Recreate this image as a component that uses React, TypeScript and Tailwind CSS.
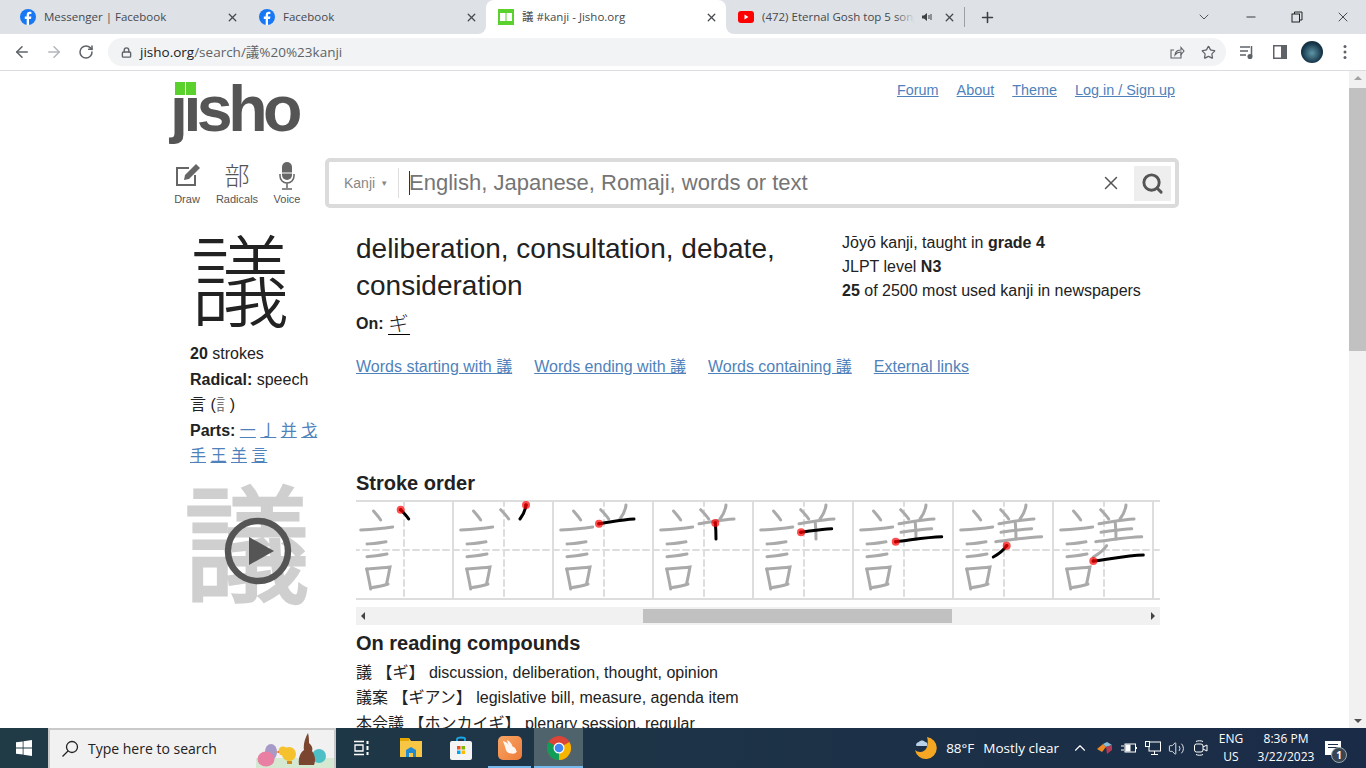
import React from "react";
import { ArrowLeft, ArrowRight, RotateCw, Lock, Star, X, Plus, ChevronDown, Minus, Search, ChevronUp, Volume2 } from "lucide-react";

const SANS = "font-['Liberation_Sans','Noto_Sans_CJK_JP',sans-serif]";
const UI = "font-['Open_Sans','Noto_Sans_CJK_JP',sans-serif]";
const LINK = "text-[#4f82bb] underline";

function Fb() {
  return (
    <svg viewBox="0 0 16 16" className="w-4 h-4 shrink-0">
      <circle cx="8" cy="8" r="8" fill="#1877f2" />
      <path d="M9 16V10h2l.4-2.4H9V6.2c0-.8.3-1.2 1.3-1.2h1.1V3c-.4-.1-1.1-.2-1.8-.2C8 2.8 6.700 4 6.700 6v1.600H4.800V10h1.900v6z" fill="#fff" />
    </svg>
  );
}
function JishoFav() {
  return (
    <svg viewBox="0 0 16 16" className="w-4 h-4 shrink-0">
      <rect width="16" height="16" fill="#5ad12d" />
      <rect x="2" y="4" width="5.500" height="8" fill="#fff" />
      <rect x="8.500" y="4" width="5.500" height="8" fill="#fff" />
    </svg>
  );
}
function Yt() {
  return (
    <svg viewBox="0 0 16 16" className="w-4 h-4 shrink-0">
      <rect y="2" width="16" height="12" rx="3" fill="#f00" />
      <path d="M6.500 5.500 10.500 8l-4 2.500z" fill="#fff" />
    </svg>
  );
}

function Tab({ icon, title, active, w, audio }: { icon: React.ReactNode; title: string; active?: boolean; w: string; audio?: boolean }) {
  return (
    <div className={`${w} relative h-[34px] flex items-center pl-3 pr-2 shrink-0 ${active ? "bg-white rounded-t-[8px]" : ""}`}>
      {active && (
        <>
          <div className="absolute -left-[8px] bottom-0 w-2 h-2 bg-white">
            <div className="w-2 h-2 bg-[#dee1e6] rounded-br-[8px]" />
          </div>
          <div className="absolute -right-[8px] bottom-0 w-2 h-2 bg-white">
            <div className="w-2 h-2 bg-[#dee1e6] rounded-bl-[8px]" />
          </div>
        </>
      )}
      {icon}
      <span className={`relative ml-2 flex-1 overflow-hidden whitespace-nowrap text-[11.5px] text-[#45494e] ${UI}`}>
        {title}
        {audio && <span className="absolute right-0 top-0 bottom-0 w-[20px] bg-gradient-to-r from-transparent to-[#dee1e6]" />}
      </span>
      {audio && (
        <svg viewBox="0 0 12 12" className="w-3 h-3 shrink-0 mx-[6px]">
          <path d="M1 4.500h2L6 2v8L3 7.500H1z" fill="#3c4043" />
          <path d="M8 4v4M10 3v6" stroke="#3c4043" strokeWidth="1" />
        </svg>
      )}
      <X size={13} strokeWidth={2.4} className="text-[#45494e] shrink-0 ml-1" />
    </div>
  );
}

function Chrome() {
  return (
    <>
      <div className="h-[34px] bg-[#dee1e6] flex items-center pl-2 shrink-0">
        <Tab icon={<Fb />} title="Messenger | Facebook" w="w-[239px]" />
        <Tab icon={<Fb />} title="Facebook" w="w-[239px]" />
        <Tab icon={<JishoFav />} title="議 #kanji - Jisho.org" active w="w-[240px]" />
        <Tab icon={<Yt />} title="(472) Eternal Gosh top 5 songs" audio w="w-[238px]" />
        <div className="w-px h-5 bg-[#9aa0a6]" />
        <Plus size={17} strokeWidth={2.2} className="ml-[14px] text-[#3c4043]" />
        <div className="flex-1" />
        <ChevronDown size={16} strokeWidth={1.3} className="text-[#3c4043]" />
        <Minus size={14} strokeWidth={1.5} className="ml-[32px] text-[#222]" />
        <svg viewBox="0 0 12 12" className="w-3 h-3 ml-[33px]" fill="none" stroke="#222" strokeWidth="1">
          <rect x="1" y="3" width="7.500" height="8" />
          <path d="M3.500 3V1H11v8H8.500" />
        </svg>
        <X size={16} strokeWidth={1.2} className="ml-[32px] mr-[15px] text-[#222]" />
      </div>
      <div className="h-[36px] bg-white flex items-center pl-[13px] shrink-0">
        <ArrowLeft size={18} strokeWidth={2.1} className="text-[#5f6368]" />
        <ArrowRight size={18} strokeWidth={2.1} className="ml-[14px] text-[#b4b7ba]" />
        <RotateCw size={16} strokeWidth={2.3} className="ml-[15px] text-[#5f6368]" />
        <div className="ml-[14px] w-[1118px] h-[28px] rounded-full bg-[#f1f3f4] flex items-center pl-[13px] pr-[10px]">
          <Lock size={11} strokeWidth={3} className="text-[#5f6368]" />
          <span className={`ml-[8px] text-[13.5px] text-[#202124] ${UI}`}>
            jisho.org<span className="text-[#5f6368]">/search/議%20%23kanji</span>
          </span>
          <div className="flex-1" />
          <svg viewBox="0 0 16 16" className="w-4 h-4" fill="none" stroke="#5f6368" strokeWidth="1.100">
            <path d="M12 9.500V14H2V6h3" />
            <path d="M6 11c.3-3 2.500-5 6-5V3.500L15 7l-3 3.500V8c-2.500 0-4.500 1-6 3z" />
          </svg>
          <Star size={15} strokeWidth={2} className="ml-[16px] text-[#5f6368]" />
        </div>
        <svg viewBox="0 0 16 16" className="w-4 h-4 ml-[13px]" fill="none" stroke="#5f6368" strokeWidth="1.500">
          <path d="M1 3h10M1 7h8M1 11h6M12.500 2v10" />
          <circle cx="11" cy="12.500" r="1.800" fill="#5f6368" />
        </svg>
        <svg viewBox="0 0 14 14" className="w-[14px] h-[14px] ml-[18px]">
          <rect x=".75" y=".75" width="12.500" height="12.500" fill="none" stroke="#5f6368" strokeWidth="1.500" />
          <rect x="8" y="1" width="5" height="12" fill="#5f6368" />
        </svg>
        <div className="w-[22px] h-[22px] ml-[14px] rounded-full bg-[radial-gradient(circle_at_50%_55%,#5e97a8,#17364a_60%,#0d1c2b)]" />
        <svg viewBox="0 0 4 16" className="w-1 h-4 ml-[20px]" fill="#5f6368">
          <circle cx="2" cy="2.500" r="1.500" />
          <circle cx="2" cy="8" r="1.500" />
          <circle cx="2" cy="13.500" r="1.500" />
        </svg>
      </div>
      <div className="h-px bg-[#dadce0] shrink-0" />
    </>
  );
}

const STROKES = [
  "M20.500 10 C23 13 26 16 27.700 19",
  "M7.700 29 C18 28.500 30 27.500 39.700 26",
  "M14 43 C20 42.500 27 42 33 40.700",
  "M14 55.700 C20 55 27 54.500 34 53",
  "M13.700 68 C15 74 16.500 81 17.700 88",
  "M13.700 68 C21 67.500 30 67 37 66 C36 71 35 77 33.700 82",
  "M17.700 86.700 C23 86 30 85 35 83",
  "M47.700 8.700 C50 11 53.500 14.500 55.700 18",
  "M73 4 C72.500 9 70 14 67 18",
  "M46 22.700 C58 21 70 18.500 81 18",
  "M62.300 22 C62.800 27 63 33 63 38",
  "M48 31.300 C58 30 68 28 78.700 27.700",
  "M42.700 40.700 C58 39 74 36 88.700 35.700",
  "M53.700 44.700 C50 50 45 53.500 40.300 56",
  "M40.300 60 C57 58 74 54.500 90.300 54",
];
const STARTS: [number, number][] = [
  [47.7, 8.7], [73, 4], [46, 22.7], [62.3, 22], [48, 31.3], [42.7, 40.7], [53.7, 44.7], [40.3, 60],
];

function Frame({ n }: { n: number }) {
  const gray = n < 0 ? [] : STROKES.slice(0, 7 + n);
  return (
    <svg viewBox="0 0 100 100" className="w-[100px] h-[100px] shrink-0 overflow-visible" fill="none" strokeLinecap="round">
      <path d="M0 50H100M51 0V100" stroke="#ddd" strokeWidth="2" strokeDasharray="6 4" />
      <path d="M0 1H100M0 99H100M0 0V100" stroke="#ddd" strokeWidth="2" strokeLinecap="butt" />
      <g transform="translate(0 1)">
        {gray.map((d, i) => (
          <path key={i} d={d} stroke="#aaa" strokeWidth="3" />
        ))}
        {n >= 0 && (
          <>
            <path d={STROKES[7 + n]} stroke="#000" strokeWidth="3" />
            <circle cx={STARTS[n][0]} cy={STARTS[n][1]} r="4" fill="#f00" fillOpacity=".7" />
            <circle cx={STARTS[n][0]} cy={STARTS[n][1]} r="1.800" fill="#b00" />
          </>
        )}
      </g>
    </svg>
  );
}

function Tray() {
  return (
    <div className={`flex text-[11px] text-[#555] ${SANS}`}>
      <div className="w-[50px] flex flex-col items-center">
        <svg viewBox="0 0 26 26" className="w-[26px] h-[26px] mt-[4px] ml-[2px]" fill="none">
          <path d="M20 13v10H2V6h12" stroke="#666" strokeWidth="2" />
          <path d="M9 18l1-5L21 2l4 4-11 11z" fill="#666" />
        </svg>
        <span className="mt-[3px]">Draw</span>
      </div>
      <div className="w-[50px] flex flex-col items-center">
        <span className="text-[25px] leading-[33px] font-['Noto_Sans_CJK_JP',sans-serif] font-light">部</span>
        <span>Radicals</span>
      </div>
      <div className="w-[50px] flex flex-col items-center">
        <svg viewBox="0 0 20 30" className="w-[20px] h-[30px] mt-[3px]" fill="none">
          <rect x="5" y="1" width="10" height="18" rx="5" fill="#666" />
          <path d="M5 12h10" stroke="#fff" strokeWidth="1" />
          <path d="M3 13v2c0 4 3 7 7 7s7-3 7-7v-2M10 22v5M5 28h10" stroke="#666" strokeWidth="1.500" />
        </svg>
        <span>Voice</span>
      </div>
    </div>
  );
}

function SearchBar() {
  return (
    <div className="ml-[13px] w-[854px] h-[50px] border-[4px] border-[#dbdbdb] rounded-[5px] bg-white flex items-center pl-[15px] pr-[4px]">
      <span className={`text-[14px] text-[#888] ${SANS}`}>Kanji</span>
      <span className="ml-[5px] text-[8px] text-[#888]">▼</span>
      <div className="ml-[10px] w-px h-[30px] bg-[#ddd]" />
      <div className="ml-[10px] w-px h-[24px] bg-[#333]" />
      <span className={`-ml-[1px] -mt-[2px] text-[22px] text-[#757575] ${SANS}`}>English, Japanese, Romaji, words or text</span>
      <div className="flex-1" />
      <X size={22} strokeWidth={1.6} className="text-[#555]" />
      <div className="ml-[12px] w-[37px] h-[35px] bg-[#eee] flex items-center justify-center">
        <Search size={23} strokeWidth={3} className="text-[#555]" />
      </div>
    </div>
  );
}

function LeftCol() {
  return (
    <div className={`ml-[190px] w-[166px] shrink-0 text-[16px] leading-[25.6px] text-[#222] ${SANS}`}>
      <div className="text-[100px] leading-[133px] font-['Noto_Sans_CJK_JP',sans-serif] font-light ml-0 pt-[1px] h-[133px]">議</div>
      <div>
        <b>20</b> strokes
      </div>
      <div>
        <b>Radical:</b> speech
      </div>
      <div>
        言 <span>(</span>
        <span className="text-[#777]">訁</span>
        <span className="-ml-[2px]">)</span>
      </div>
      <div>
        <b>Parts:</b>{" "}
        {["一", "亅", "并", "戈"].map((p) => (
          <span key={p}>
            <span className={LINK}>{p}</span>{" "}
          </span>
        ))}
      </div>
      <div>
        {["手", "王", "羊", "言"].map((p) => (
          <span key={p}>
            <span className={LINK}>{p}</span>{" "}
          </span>
        ))}
      </div>
      <div className="relative mt-[3px] w-[120px] h-[130px]">
        <span className="block -ml-[6px] text-[126px] leading-[130px] font-normal [-webkit-text-stroke:3px_#cfcfcf] text-[#cfcfcf] font-['Noto_Sans_CJK_JP',sans-serif] blur-[0.6px]">議</span>
        <svg viewBox="0 0 68 68" className="absolute left-[34px] top-[45px] w-[68px] h-[68px]">
          <circle cx="34" cy="34" r="30" fill="none" stroke="#555" strokeWidth="6.500" />
          <path d="M25 20 L50 34 L25 48z" fill="#555" />
        </svg>
      </div>
    </div>
  );
}

function RightCol() {
  return (
    <div className={`w-[804px] shrink-0 text-[#222] ${SANS}`}>
      <div className="flex pt-[22px]">
        <div className="w-[487px]">
          <div className="w-[440px] text-[28px] leading-[37px]">deliberation, consultation, debate, consideration</div>
          <div className="mt-[7px] flex items-center h-[26px] text-[16px]">
            <b>On:</b>
            <span className="ml-[4px] -mt-[2px] text-[20px] leading-[22px] border-b border-black font-['Noto_Sans_CJK_JP',sans-serif] font-light px-[1px]">ギ</span>
          </div>
        </div>
        <div className="text-[16px] leading-[24px] pt-[1px] -ml-[1px]">
          <div>
            Jōyō kanji, taught in <b>grade 4</b>
          </div>
          <div>
            JLPT level <b>N3</b>
          </div>
          <div>
            <b>25</b> of 2500 most used kanji in newspapers
          </div>
        </div>
      </div>
      <div className="mt-[17px] flex gap-[22px] text-[16px] leading-[25.6px]">
        <span className={LINK}>Words starting with 議</span>
        <span className={LINK}>Words ending with 議</span>
        <span className={LINK}>Words containing 議</span>
        <span className={LINK}>External links</span>
      </div>
      <div className="mt-[88px] text-[20px] leading-[30px] font-bold">Stroke order</div>
      <div className="mt-[2px] w-[804px] h-[100px] overflow-hidden">
        <div className="flex -ml-[3px]">
          {[0, 1, 2, 3, 4, 5, 6, 7].map((n) => (
            <Frame key={n} n={n} />
          ))}
          <Frame n={-1} />
        </div>
      </div>
      <div className="mt-[7px] h-[18px] bg-[#f1f1f1] flex items-center">
        <span className="ml-[5px] w-0 h-0 border-y-[4px] border-y-transparent border-r-[4px] border-r-[#444]" />
        <div className="ml-[278px] w-[309px] h-[14px] bg-[#c1c1c1]" />
        <div className="flex-1" />
        <span className="mr-[5px] w-0 h-0 border-y-[4px] border-y-transparent border-l-[4px] border-l-[#444]" />
      </div>
      <div className="mt-[3px] text-[20px] leading-[30px] font-bold">On reading compounds</div>
      <div className="mt-[2px] text-[16px] leading-[25.6px]">
        <div>議 【ギ】 discussion, deliberation, thought, opinion</div>
        <div>議案 【ギアン】 legislative bill, measure, agenda item</div>
        <div>本会議 【ホンカイギ】 plenary session, regular</div>
      </div>
    </div>
  );
}

function Page() {
  return (
    <div className="flex-1 min-h-0 flex overflow-hidden bg-white relative">
      <div className="flex-1 min-w-0 overflow-hidden">
        <div className="ml-[170px] w-[1005px] h-[87px] flex justify-between">
          <div className="relative w-[135px] h-[87px]">
            <span className={`absolute left-0 top-[5px] text-[64.5px] leading-[66px] font-bold tracking-[-4.5px] text-[#555] ${SANS}`}>jisho</span>
            <svg viewBox="0 0 30 16" className="absolute left-0 top-[11px] w-[30px] h-[16px]">
              <rect width="30" height="16" fill="#fff" />
              <rect x="5" width="10" height="13" fill="#5ad12d" />
              <rect x="16" width="10" height="13" fill="#5ad12d" />
            </svg>
          </div>
          <div className={`pt-[10px] flex gap-[18px] text-[14.4px] leading-[18px] ${SANS}`}>
            <span className={LINK}>Forum</span>
            <span className={LINK}>About</span>
            <span className={LINK}>Theme</span>
            <span className={LINK}>Log in / Sign up</span>
          </div>
        </div>
        <div className="ml-[162px] flex">
          <Tray />
          <SearchBar />
        </div>
        <div className="flex">
          <LeftCol />
          <RightCol />
        </div>
      </div>
      <div className="w-[17px] shrink-0 bg-[#f1f1f1] flex flex-col items-center">
        <span className="mt-[5px] w-0 h-0 border-x-[4px] border-x-transparent border-b-[4px] border-b-[#a3a3a3]" />
        <div className="mt-[8px] w-full h-[263px] bg-[#c1c1c1]" />
        <div className="flex-1" />
        <span className="mb-[5px] w-0 h-0 border-x-[4px] border-x-transparent border-t-[4px] border-t-[#505050]" />
      </div>
    </div>
  );
}

function Taskbar() {
  return (
    <div className={`h-[40px] shrink-0 flex items-stretch text-white bg-gradient-to-r from-[#203b46] to-[#1a2b47] ${UI}`}>
      <div className="w-[48px] flex items-center justify-center">
        <svg viewBox="0 0 16 16" className="w-4 h-4" fill="#fff">
          <path d="M0 2.300 6.700 1.400V7.600H0zM7.500 1.300 16 0V7.600H7.500zM0 8.400H6.700V14.600L0 13.700zM7.500 8.400H16V16L7.500 14.700z" />
        </svg>
      </div>
      <div className="w-[288px] bg-[#f1f1f1] border-2 border-[#c9c9c9] border-b-0 flex items-center relative overflow-hidden">
        <svg viewBox="0 0 18 18" className="ml-[11px] w-[18px] h-[18px]" fill="none" stroke="#222" strokeWidth="1.300">
          <circle cx="11" cy="7" r="5.500" />
          <path d="M7 11 1.500 16.500" />
        </svg>
        <span className="ml-[9px] -mt-[2px] text-[14px] text-[#222]">Type here to search</span>
        <svg viewBox="0 0 78 38" className="absolute right-0 bottom-0 w-[78px] h-[38px]">
          <rect x="0" y="28" width="78" height="10" fill="#d4e8d2" />
          <ellipse cx="15" cy="22" rx="6" ry="8" fill="#a79ac6" />
          <ellipse cx="10" cy="29" rx="8.500" ry="7.500" fill="#e97fa3" />
          <ellipse cx="63" cy="26" rx="7" ry="7" fill="#4cc0c6" />
          <circle cx="33" cy="24" r="7" fill="#f5c12c" />
          <circle cx="27" cy="21" r="4.500" fill="#f5c12c" />
          <path d="M23 21l-3 1 3 1z" fill="#e0641c" />
          <path d="M31 31h5v3h-5z" fill="#d08a20" />
          <path d="M43 35c-1-7 1-12 5-15-1-5 1-12 4-17 1 4 1 7 1 10 3 3 4 5 3 8 3 4 4 9 2 14z" fill="#7a4630" />
        </svg>
      </div>
      <div className="w-[48px] flex items-center justify-center ml-[1px]">
        <svg viewBox="0 0 16 16" className="w-4 h-4" fill="none" stroke="#fff" strokeWidth="1.300">
          <path d="M1 1.500H11M1 14.500H11M2 5h8v6H2z" />
          <path d="M14.500 1v3M14.500 6v4M14.500 12v3" strokeWidth="2" />
        </svg>
      </div>
      <div className="w-[50px] ml-[1px] flex items-center justify-center">
        <svg viewBox="0 0 22 22" className="w-[22px] h-[22px]">
          <path d="M0 1h9l2 3h11v16H0z" fill="#f7c644" />
          <path d="M0 1h9v3H0z" fill="#e6a800" />
          <path d="M6 20v-7l5-3 5 3v7h-3v-4H9v4z" fill="#1f8ad2" />
        </svg>
      </div>
      <div className="w-[49px] flex items-center justify-center">
        <svg viewBox="0 0 22 24" className="w-[22px] h-[24px]">
          <path d="M7 6V3c0-2 8-2 8 0v3" fill="none" stroke="#1aa7e8" strokeWidth="1.800" />
          <rect y="5" width="22" height="19" rx="2" fill="#f4f4f4" />
          <rect x="7" y="10" width="3.500" height="3.500" fill="#f25022" />
          <rect x="11.500" y="10" width="3.500" height="3.500" fill="#7fba00" />
          <rect x="7" y="14.500" width="3.500" height="3.500" fill="#00a4ef" />
          <rect x="11.500" y="14.500" width="3.500" height="3.500" fill="#ffb900" />
        </svg>
      </div>
      <div className="w-[49px] flex flex-col items-center justify-center relative">
        <svg viewBox="0 0 24 24" className="w-[24px] h-[24px]">
          <defs>
            <linearGradient id="appg" x1="0" y1="0" x2="1" y2="1">
              <stop offset="0" stopColor="#f7a564" />
              <stop offset="1" stopColor="#ee7c3a" />
            </linearGradient>
          </defs>
          <rect width="24" height="24" rx="5" fill="url(#appg)" />
          <path d="M5 5c3 .5 5 2.500 6 4.500C10 7.500 9 5 9 4c3 1 5 4 5.500 6.500 2 .5 3.500 2 3.500 4 .8.5 1 1 .5 1.500-1 1.500-3 2-5 1.500-3.500 0-5.500-2-6-5-.5-2.500-1.700-5-2.500-7z" fill="#fff" fillOpacity=".92" />
        </svg>
        <div className="absolute bottom-0 left-[3px] right-[3px] h-[2px] bg-[#76b9ed]" />
      </div>
      <div className="w-[49px] bg-[#4f636d] flex items-center justify-center relative">
        <svg viewBox="0 0 24 24" className="w-[24px] h-[24px]">
          <circle cx="12" cy="12" r="12" fill="#db4437" />
          <path d="M12 12 22.400 6A12 12 0 0 1 12 24z" fill="#f4b400" />
          <path d="M12 12 12 24A12 12 0 0 1 1.600 6z" fill="#0f9d58" />
          <circle cx="12" cy="12" r="5.500" fill="#fff" />
          <circle cx="12" cy="12" r="4.300" fill="#4285f4" />
        </svg>
        <div className="absolute bottom-0 left-0 right-0 h-[2px] bg-[#76b9ed]" />
      </div>
      <div className="flex-1" />
      <div className="flex items-center">
        <svg viewBox="0 0 24 24" className="w-[24px] h-[24px]">
          <path d="M13 1a11 11 0 1 1-12 13c3 3 10 3 12-3 1-4 1-7 0-10z" fill="#f5a623" />
          <path d="M2 9c0-2 2-3 3-3 1-2 5-2 6 0 2 0 3 2 2 4H3c-1 0-1-1-1-1z" fill="#b9d2ea" />
        </svg>
        <span className="ml-[8px] text-[13.500px] whitespace-nowrap">88°F</span>
        <span className="ml-[9px] text-[13.500px] whitespace-nowrap">Mostly clear</span>
        <ChevronUp size={18} strokeWidth={1.5} className="ml-[12px]" />
        <svg viewBox="0 0 16 14" className="w-4 h-[14px] ml-[8px]">
          <path d="M0 8 6 3l3 3-4 5z" fill="#f08a24" />
          <path d="M6 3 10 1l5 3-6 2z" fill="#87bcd6" />
          <path d="M9 6l6-2v5l-5 4z" fill="#b63a52" />
        </svg>
        <svg viewBox="0 0 16 14" className="w-4 h-[14px] ml-[8px]" fill="none" stroke="#fff" strokeWidth="1">
          <rect x="4" y="3" width="10.500" height="8" />
          <path d="M15.500 6v2" />
          <path d="M0 5h3M0 9h3" />
          <rect x="5" y="4" width="4" height="6" fill="#fff" />
        </svg>
        <svg viewBox="0 0 16 14" className="w-4 h-[14px] ml-[8px]" fill="none" stroke="#fff" strokeWidth="1">
          <rect x="4" y="1" width="11.500" height="9" />
          <path d="M9.500 10v3M6 13.500h7" />
          <rect x=".5" y=".5" width="4" height="5" fill="#1c2f46" />
        </svg>
        <Volume2 size={17} strokeWidth={1.2} className="ml-[7px]" />
        <svg viewBox="0 0 14 18" className="w-[14px] h-[18px] ml-[9px]" fill="none" stroke="#fff" strokeWidth="1">
          <rect x=".5" y="5" width="8.500" height="8" rx="2" />
          <path d="M9 8l4-2v6l-4-2M2 2.500c2-1 5-1 7 0M2 15.500c2 1 5 1 7 0" />
        </svg>
        <div className="ml-[3px] w-[40px] flex flex-col items-center text-[12px] leading-[18px]">
          <span>ENG</span>
          <span>US</span>
        </div>
        <div className="ml-0 w-[70px] flex flex-col items-center text-[12px] leading-[18px]">
          <span>8:36 PM</span>
          <span>3/22/2023</span>
        </div>
        <div className="relative ml-[4px] mr-[25px] w-[16px] h-[14px] bg-white">
          <div className="absolute left-[3px] top-[3px] w-[10px] h-[1px] bg-[#1c2f46]" />
          <div className="absolute left-[3px] top-[6px] w-[10px] h-[1px] bg-[#1c2f46]" />
          <span className="absolute left-[6px] top-[6px] w-[16px] h-[16px] rounded-full bg-[#3a4452] border border-[#9aa] text-[10px] leading-[14px] text-center font-bold">1</span>
        </div>
      </div>
    </div>
  );
}

export default function App() {
  return (
    <div className="w-[1366px] h-[768px] flex flex-col overflow-hidden bg-white">
      <Chrome />
      <Page />
      <Taskbar />
    </div>
  );
}
